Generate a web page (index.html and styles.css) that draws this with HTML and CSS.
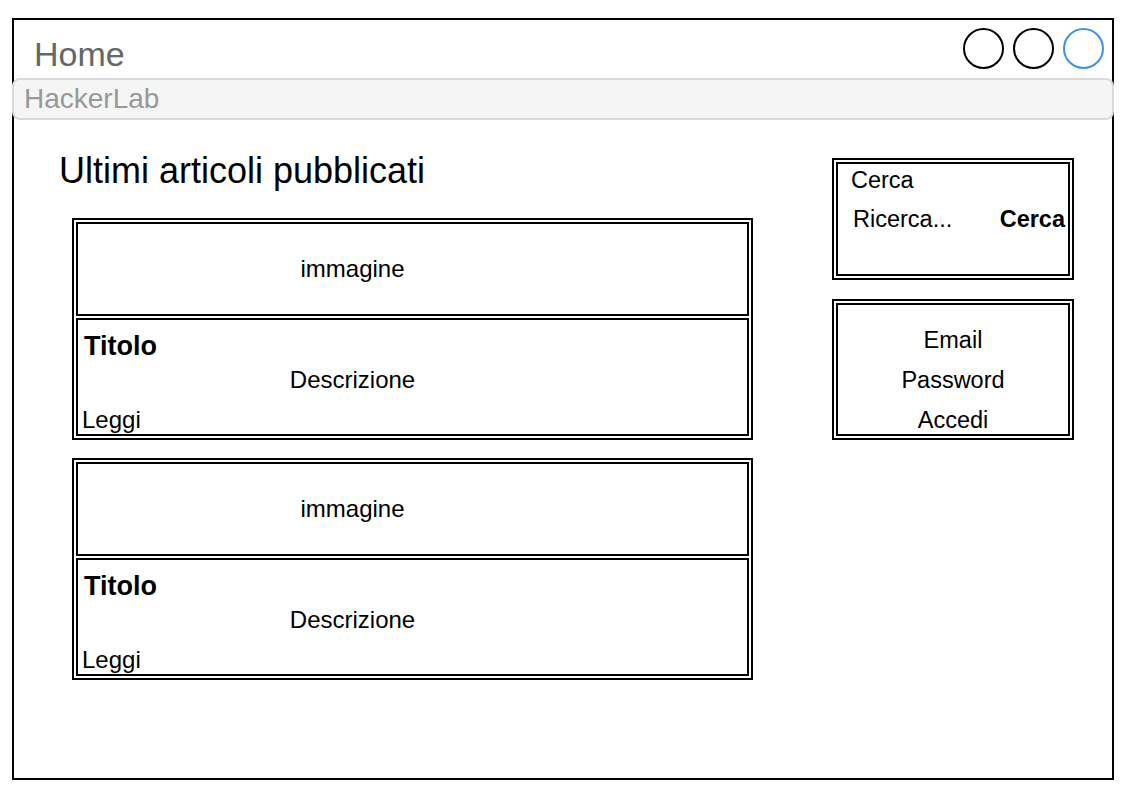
FILE: index.html
```html
<!DOCTYPE html>
<html lang="it">
<head>
    <meta charset="UTF-8">
    <meta name="viewport" content="width=device-width, initial-scale=1.0">
    <title>Home - HackerLab</title>
    <link rel="stylesheet" href="styles.css">
</head>
<body>

    <div class="window">
        <div class="window-header">
            <span class="window-title">Home</span>
            <div class="window-buttons">
                <span class="dot"></span>
                <span class="dot"></span>
                <span class="dot dot-active"></span>
            </div>
        </div>

        <div class="address-bar">HackerLab</div>

        <div class="page">
            <div class="main-column">
                <h1 class="page-title">Ultimi articoli pubblicati</h1>

                <div class="article">
                    <div class="article-image"><span>immagine</span></div>
                    <div class="article-body">
                        <div class="article-title">Titolo</div>
                        <div class="article-desc">Descrizione</div>
                        <div class="article-link">Leggi</div>
                    </div>
                </div>

                <div class="article">
                    <div class="article-image"><span>immagine</span></div>
                    <div class="article-body">
                        <div class="article-title">Titolo</div>
                        <div class="article-desc">Descrizione</div>
                        <div class="article-link">Leggi</div>
                    </div>
                </div>
            </div>

            <div class="sidebar">
                <div class="widget search-widget">
                    <div class="search-label">Cerca</div>
                    <div class="search-row">
                        <span class="search-input">Ricerca...</span>
                        <span class="search-button">Cerca</span>
                    </div>
                </div>

                <div class="widget login-widget">
                    <div class="login-line">Email</div>
                    <div class="login-line">Password</div>
                    <div class="login-line">Accedi</div>
                </div>
            </div>
        </div>
    </div>

</body>
</html>
```

FILE: styles.css
```css
/* HackerLab wireframe - homepage */
:root {
    --ink: #000;
    --title-grey: #666;
    --bar-bg: #f5f5f5;
    --bar-border: #dadada;
    --bar-text: #999;
    --accent-blue: #3d8ff0;
}

html, body {
    margin: 0;
    background: #fff;
}

body {
    font-family: 'Liberation Sans', Arial, Helvetica, sans-serif;
    color: var(--ink);
}

.window {
    margin: 18px 0 0 12px;
    width: 1102px;
    height: 762px;
    border: 2px solid var(--ink);
    box-sizing: border-box;
}

/* title bar with the three round buttons */
.window-header {
    height: 58px;
    display: flex;
    justify-content: space-between;
    align-items: flex-start;
    padding: 8px 8px 0 20px;
    box-sizing: border-box;
}

.window-title {
    font-size: 34px;
    line-height: 40px;
    color: var(--title-grey);
    margin-top: 6px;
}

.window-buttons {
    display: flex;
    gap: 9px;
}

.dot {
    width: 41px;
    height: 41px;
    border: 2px solid var(--ink);
    border-radius: 50%;
    box-sizing: border-box;
}

.dot-active {
    border-color: var(--accent-blue);
}

.address-bar {
    margin: 0 -2px;
    height: 42px;
    background: var(--bar-bg);
    border: 2px solid var(--bar-border);
    border-radius: 8px;
    box-sizing: border-box;
    padding-left: 10px;
    font-size: 28px;
    line-height: 38px;
    color: var(--bar-text);
}

/* page content */
.page {
    display: flex;
    align-items: flex-start;
    padding: 31px 0 0 58px;
    gap: 79px;
}

.main-column {
    width: 681px;
}

.page-title {
    margin: 0 0 27px -13px;
    font-size: 36px;
    line-height: 40px;
    font-weight: normal;
}

.article {
    border: 2px solid var(--ink);
    padding: 2px;
    display: flex;
    flex-direction: column;
    gap: 2px;
    margin-bottom: 18px;
}

.article-image {
    height: 94px;
    border: 2px solid var(--ink);
    box-sizing: border-box;
    display: flex;
    align-items: center;
    justify-content: center;
    padding-right: 120px;
    font-size: 24px;
}

.article-body {
    height: 118px;
    border: 2px solid var(--ink);
    box-sizing: border-box;
    padding-top: 12px;
    font-size: 24px;
}

.article-title {
    font-size: 27px;
    font-weight: bold;
    line-height: 28px;
    padding-left: 6px;
}

.article-desc {
    line-height: 40px;
    text-align: center;
    padding-right: 120px;
}

.article-link {
    line-height: 32px;
    margin-top: 4px;
    padding-left: 4px;
}

/* sidebar widgets */
.sidebar {
    width: 242px;
    margin-top: 7px;
    display: flex;
    flex-direction: column;
    gap: 19px;
}

.widget {
    border: 6px double var(--ink);
    box-sizing: border-box;
    font-size: 23.5px;
}

.search-widget {
    height: 122px;
    padding: 0 3px 0 13px;
}

.search-label {
    line-height: 32px;
    margin-bottom: 3px;
}

.search-row {
    display: flex;
    justify-content: space-between;
    line-height: 40px;
}

.search-input {
    padding-left: 2px;
}

.search-button {
    font-weight: bold;
}

.login-widget {
    height: 141px;
    padding-top: 15px;
    text-align: center;
}

.login-line {
    line-height: 40px;
}
```
